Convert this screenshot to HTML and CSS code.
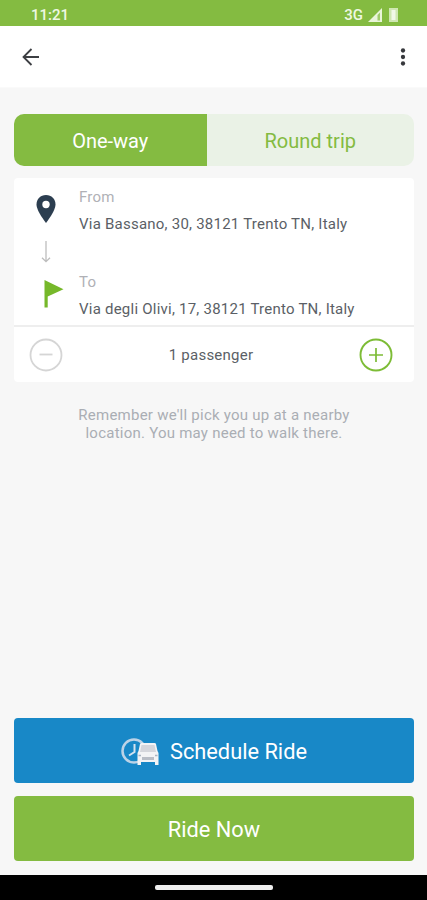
FILE: index.html
```html
<!DOCTYPE html>
<html lang="en">
<head>
<meta charset="utf-8">
<title>Book a ride</title>
<link rel="stylesheet" href="styles.css">
</head>
<body>
<div class="screen">
  <div class="status">
    <span class="clock">11:21</span>
    <span class="network">3G</span>
    <svg class="signal" width="14" height="14" viewBox="0 0 14 14"><path d="M14 0V14H0Z" fill="#e9f5d9"/><path d="M9.500 7V12.500H12V4.500Z" fill="#9fcb6b"/></svg>
    <svg class="battery" width="9" height="14" viewBox="0 0 9 14"><path d="M0 0H9V14H0z" fill="#cfe7b2"/><path d="M2.500 2h4v10h-4z" fill="#f1f8e8"/></svg>
  </div>
  <header class="bar">
    <svg width="18" height="18" viewBox="0 0 18 18" fill="none" stroke="#3d3f43" stroke-width="1.800"><path d="M17 9H2M9.500 1L1.500 9L9.500 17"/></svg>
    <svg width="6" height="20" viewBox="0 0 6 20" fill="#36383c"><circle cx="3" cy="3.500" r="2.150"/><circle cx="3" cy="10" r="2.150"/><circle cx="3" cy="16.500" r="2.150"/></svg>
  </header>
  <main class="content">
    <div class="tabs"><div class="tab active"><span>One-way</span></div><div class="tab"><span>Round trip</span></div></div>
    <section class="card">
      <div class="route">
        <div class="markers">
          <svg class="pin" width="20" height="28" viewBox="0 0 20 28"><path d="M10 0C4.500 0 .5 4.100.5 9.500C.5 16 10 28 10 28S19.500 16 19.500 9.500C19.500 4.100 15.500 0 10 0Z" fill="#2c3e50"/><circle cx="10" cy="9.500" r="3.700" fill="#fff"/></svg>
          <svg class="down" width="10" height="22" viewBox="0 0 10 22" fill="none" stroke="#bdbdbd" stroke-width="1.300"><path d="M5 0V20.500M1 16.700L5 20.700L9 16.700"/></svg>
          <svg class="flag" width="20" height="28" viewBox="0 0 20 28"><path d="M.5 0L19.500 9.200L3.700 16.500V27.500H.5Z" fill="#76b82a"/></svg>
        </div>
        <div class="places">
          <div class="label">From</div>
          <div class="address"><span class="from">Via Bassano, 30, 38121 Trento TN, Italy</span></div>
          <div class="label second">To</div>
          <div class="address"><span class="to">Via degli Olivi, 17, 38121 Trento TN, Italy</span></div>
        </div>
      </div>
      <div class="passengers">
        <svg width="34" height="34" viewBox="0 0 34 34" fill="none" stroke="#d5d5d5" stroke-width="1.800"><circle cx="17" cy="17" r="15.500"/><path d="M10.500 16.500H23.500"/></svg>
        <span class="count">1 passenger</span>
        <svg width="34" height="34" viewBox="0 0 34 34" fill="none" stroke="#7dbc36" stroke-width="1.900"><circle cx="17" cy="17" r="15.500"/><path d="M10 17H24M17 10V24" stroke-width="1.700"/></svg>
      </div>
    </section>
    <p class="note"><span class="n1">Remember we'll pick you up at a nearby</span><br><span class="n2">location. You may need to walk there.</span></p>
    <div class="actions">
      <div class="button schedule">
        <svg width="38" height="28" viewBox="0 0 38 28" fill="none"><circle cx="13" cy="13" r="11.500" stroke="#bcd3e7" stroke-width="2.500"/><path d="M13.500 6V14L8 17.500" stroke="#d3e3f0" stroke-width="2"/><path d="M19 6Q19.300 5 20.500 5H33.500Q34.700 5 35 6L36.500 13L37.500 15V27H34V24H20V27H16.500V15L17.500 13Z" fill="#f3f3f5"/><path d="M20.500 7H33.500L35 14H19Z" fill="#d5d6dc"/><path d="M21 19H33V22H21Z" fill="#b9bdc6"/><path d="M17.500 17.500H20M34 17.500H36.500" stroke="#aab4c2" stroke-width="1.500"/></svg>
        <span>Schedule Ride</span>
      </div>
      <div class="button now"><span>Ride Now</span></div>
    </div>
  </main>
  <div class="navbar"><div class="handle"></div></div>
</div>
</body>
</html>
```
FILE: styles.css
```css
* { box-sizing: border-box; }
body { margin: 0; font-family: Roboto, "Liberation Sans", sans-serif; }
.screen { width: 427px; height: 900px; display: flex; flex-direction: column; background: #f7f7f7; overflow: hidden; }
.status { height: 26px; flex: none; background: #84bb41; color: #eff8e3; display: flex; align-items: center; padding: 3px 29px 0 31px; font-size: 15px; font-weight: 500; }
.clock { flex: 1; }
.signal { margin-left: 5px; }
.battery { margin-left: 7px; }
.bar { height: 62px; flex: none; background: #fff; display: flex; align-items: center; justify-content: space-between; padding: 0 21px 0 22px; border-bottom: 1px solid #fafafa; }
.content { flex: 1; display: flex; flex-direction: column; padding: 26px 13px 14px 14px; }
.tabs { height: 52px; display: flex; border-radius: 10px; overflow: hidden; background: #eaf2e6; font-size: 20px; color: #84bb41; }
.tab { flex: 1; display: flex; align-items: center; justify-content: center; padding-top: 2px; }
.tab.active { flex: 0 0 192.5px; background: #84bb41; color: #fff; }
.card { margin-top: 12px; height: 204px; background: #fff; border-radius: 4px; color: #5b5f66; }
.route { height: 149px; display: flex; border-bottom: 2px solid #eee; }
.markers { width: 65px; padding: 17px 1px 0 0; display: flex; flex-direction: column; align-items: center; }
.down { margin-top: 18px; }
.flag { margin: 17px 0 0 15px; }
.places { padding-top: 9px; }
.label { height: 20px; line-height: 20px; font-size: 15px; color: #b0b1b6; letter-spacing: 0.200px; }
.address { height: 20px; line-height: 20px; margin-top: 7px; font-size: 15px; letter-spacing: 0.230px; white-space: nowrap; }
.second { margin-top: 38px; }
.passengers { height: 55px; display: flex; align-items: center; justify-content: space-between; padding: 0 21px 0 15px; font-size: 15px; letter-spacing: 0.250px; }
.note { margin: 24px 0 0; text-align: center; font-size: 15px; line-height: 18px; letter-spacing: 0.240px; color: #aaaeb4; }
.actions { margin-top: auto; display: flex; flex-direction: column; gap: 13px; }
.button { height: 65px; border-radius: 4px; display: flex; align-items: center; justify-content: center; gap: 11px; padding-top: 2px; font-size: 21.8px; color: #fff; }
.schedule { background: #1888c7; }
.now { background: #84bb41; }
.navbar { height: 25px; flex: none; background: #000; display: flex; align-items: center; justify-content: center; }
.handle { width: 118px; height: 5px; border-radius: 2px; background: #eee; }
```
